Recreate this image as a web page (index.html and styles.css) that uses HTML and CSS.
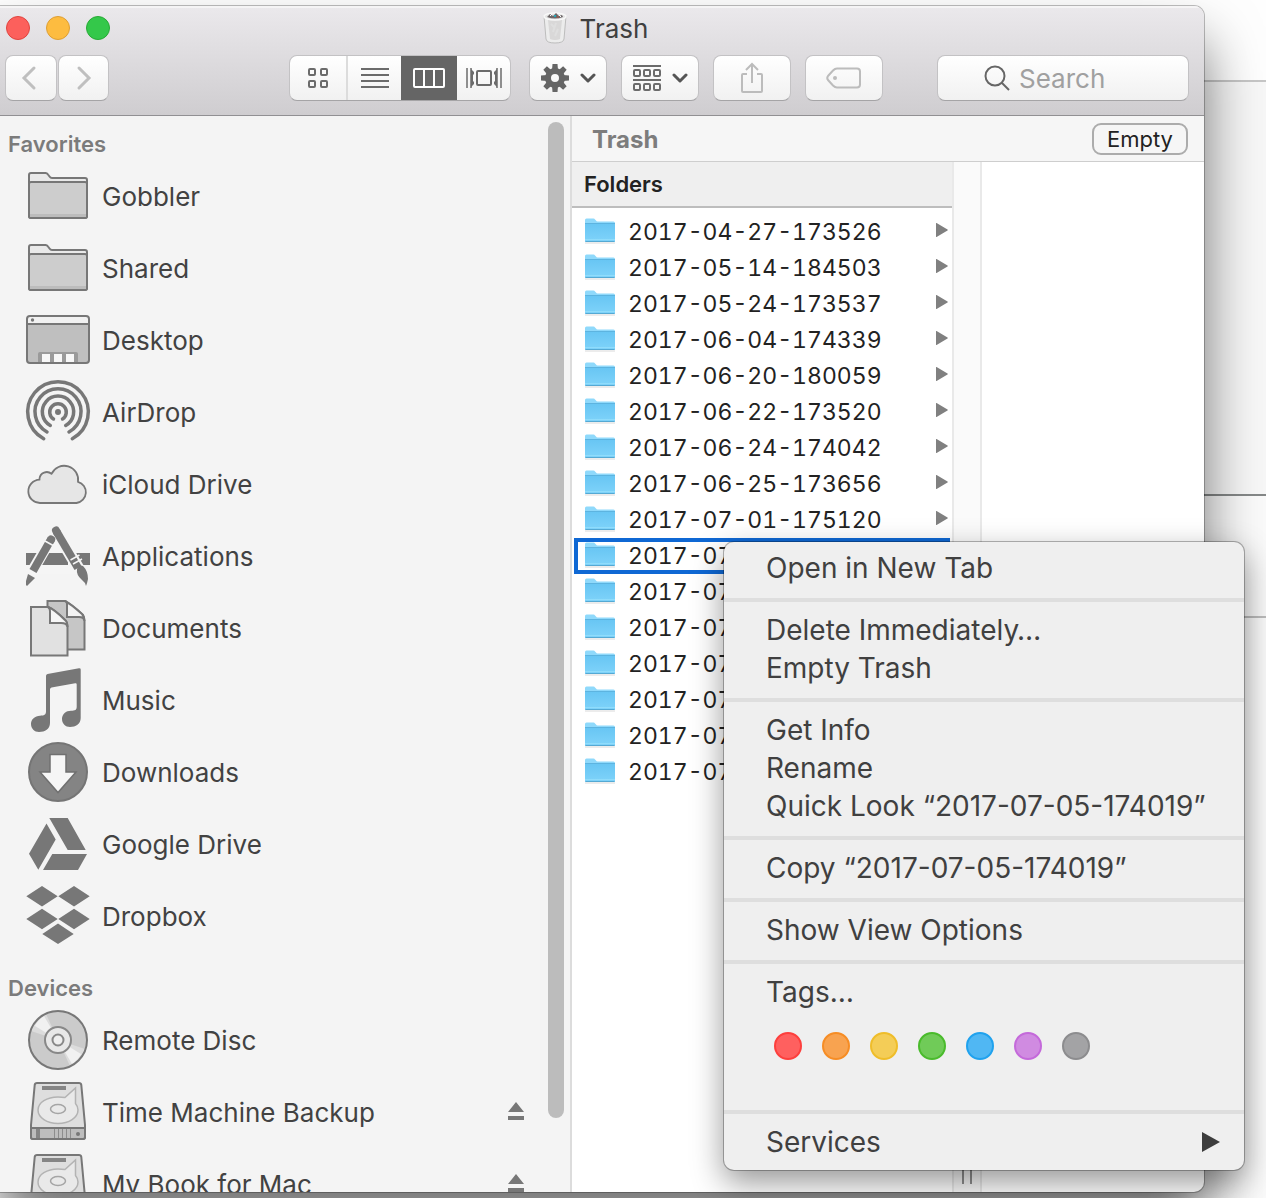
FILE: index.html
```html
<!DOCTYPE html>
<html lang="en">
<head>
<meta charset="utf-8">
<title>Trash</title>
<link rel="stylesheet" href="styles.css">
</head>
<body>
<svg class="defs" aria-hidden="true">
  <defs>
    <linearGradient id="blue" x1="0" y1="0" x2="0" y2="1"><stop offset="0" stop-color="#67c5f3"/><stop offset="1" stop-color="#7fd3fa"/></linearGradient>
    <symbol id="folder" viewBox="0 0 64 64">
      <path d="M3 52V11q0-2 2-2h14.500q1.500 0 2.500 1.500l1.500 2Q24.500 14 26 14h33q2 0 2 2v36q0 2-2 2H5q-2 0-2-2z" fill="#e9e9e9" stroke="#777" stroke-width="2"/>
      <path d="M3 20q0-2 2-2h54q2 0 2 2v32q0 2-2 2H5q-2 0-2-2z" fill="#cdcdcd" stroke="#777" stroke-width="2"/>
      <path d="M4 50h56v3H4z" fill="#bcbcbc"/>
    </symbol>
    <symbol id="blue-folder" viewBox="0 0 30 26">
      <path d="M0 24.500h30v1H0z" fill="#d9d9d9"/>
      <path d="M0 2q0-1.500 1.500-1.500h7Q9.500.5 10 1.500l1 1q.5 1 1.500 1h16Q30 3.500 30 5v18q0 1-1 1H1q-1 0-1-1z" fill="#8fd9fb"/>
      <path d="M0 5h30v18q0 1-1 1H1q-1 0-1-1z" fill="url(#blue)"/>
      <path d="M0 5.500h30" stroke="#5db4e0"/>
      <path d="M0 21.500h30" stroke="#8fdcfb"/>
      <path d="M.5 23.500h29" stroke="#55a9d3"/>
    </symbol>
    <symbol id="drive" viewBox="0 0 64 64">
      <path d="M11 3h42q2 0 2.300 2L59 45v12q0 2-2 2H7q-2 0-2-2V45L8.700 5Q9 3 11 3z" fill="#dedede" stroke="#777" stroke-width="2"/>
      <path d="M5 48h54v9q0 2-2 2H7q-2 0-2-2z" fill="#bdbdbd" stroke="#777" stroke-width="2"/>
      <path d="M16 6h24v4H16zM10 49h4v9h-4z" fill="#858585"/>
      <path d="M28.500 49v9m4-9v9m4-9v9m4-9v9m4-9v9" stroke="#8d8d8d"/>
      <circle cx="52" cy="54" r="2" fill="#777"/>
      <path d="M39 17.500L49.500 8v15.500Q52 26.500 52 30c0 7.500-9 13.500-20 13.500S12 37.500 12 30s9-13 20-13q4 0 7 .5z" fill="#e9e9e9" stroke="#b3b3b3" stroke-width="1.500"/>
      <ellipse cx="32" cy="29" rx="7.500" ry="4.500" fill="#e9e9e9" stroke="#a5a5a5" stroke-width="1.500"/>
    </symbol>
    <symbol id="eject" viewBox="0 0 16 18"><path d="M8 0l8 10H0zM0 14h16v4H0z" fill="#777"/></symbol>
    <symbol id="caret" viewBox="0 0 12 14"><path d="M0 .5Q0-.5 1 .2L11.500 6.500q.7.500 0 1L1 13.800q-1 .7-1-.3z" fill="#808080"/></symbol>
    <symbol id="chevron" viewBox="0 0 16 10"><path d="M2 2l6 6 6-6" fill="none" stroke="#555" stroke-width="3" stroke-linecap="round" stroke-linejoin="round"/></symbol>
  </defs>
</svg>

<div class="desktop">
  <main class="window">
    <header class="chrome">
      <div class="titlebar">
        <div class="lights">
          <button class="light close" aria-label="Close"></button>
          <button class="light minimize" aria-label="Minimize"></button>
          <button class="light zoom" aria-label="Zoom"></button>
        </div>
        <h1 class="title">
          <svg width="26" height="32" viewBox="0 0 26 32" aria-hidden="true">
            <path d="M2 4q11-4 22 0l-2 23q-.5 4-9 4t-9-4z" fill="#ececec" stroke="#bdbdbd"/>
            <path d="M6 8l2 19q5 2 10 0l2-19" fill="#d9d8d8"/><path d="M9 12l4 4M14 11l-3 9M16 17l-3 7" fill="none" stroke="#dfdfdf" stroke-width="2"/>
            <ellipse cx="13" cy="4.500" rx="11" ry="3.500" fill="#e4e4e4" stroke="#f8f8f8" stroke-width="1.500"/>
            <path d="M5 5l3-3 3 2 3-3 3 3 3-1 1 2q-8 3-16 0z" fill="#6d6668"/>
            <path d="M8 4l2-2M17 3l2 2" stroke="#fff"/><path d="M12 4h2" stroke="#27a4b5" stroke-width="2"/><path d="M15 5h2" stroke="#b5523c"/>
          </svg>
          <span>Trash</span>
        </h1>
      </div>
      <div class="toolbar">
        <nav class="history">
          <button class="tool" aria-label="Back"><svg width="20" height="26" viewBox="0 0 20 26"><path d="M13 3L3 13l10 10" fill="none" stroke="#bfbfbf" stroke-width="3" stroke-linecap="round"/></svg></button>
          <button class="tool" aria-label="Forward"><svg width="12" height="26" viewBox="3 0 12 26"><path d="M5 3l10 10L5 23" fill="none" stroke="#bfbfbf" stroke-width="3" stroke-linecap="round"/></svg></button>
        </nav>
        <div class="views">
          <button class="view" aria-label="Icon view"><svg width="20" height="20" viewBox="0 0 20 20" fill="none" stroke="#6b6b6b" stroke-width="2"><rect x="1" y="1" width="6" height="6" rx="1"/><rect x="13" y="1" width="6" height="6" rx="1"/><rect x="1" y="13" width="6" height="6" rx="1"/><rect x="13" y="13" width="6" height="6" rx="1"/></svg></button>
          <button class="view" aria-label="List view"><svg width="28" height="20" viewBox="0 0 28 20"><path d="M0 1h28M0 7h28M0 13h28M0 19h28" stroke="#6b6b6b" stroke-width="2"/></svg></button>
          <button class="view selected" aria-label="Column view" aria-pressed="true"><svg width="32" height="20" viewBox="0 0 32 20"><rect x="1" y="1" width="30" height="18" rx="1" fill="none" stroke="#fff" stroke-width="2"/><path d="M11 1v18M21 1v18" stroke="#fff" stroke-width="2"/></svg></button>
          <button class="view" aria-label="Cover Flow"><svg width="36" height="20" viewBox="0 0 36 20"><rect x="11" y="3" width="14" height="14" rx="1" fill="none" stroke="#6b6b6b" stroke-width="2"/><path d="M1 0v20M35 0v20M31 0v20M5 0v20" stroke="#6b6b6b" stroke-width="1.500"/><path d="M5 1l3 3v2l-1 1v6l1 1v2l-3 3zM31 1l-3 3v2l1 1v6l-1 1v2l3 3z" fill="#6b6b6b"/></svg></button>
        </div>
        <button class="tool menu-tool action" aria-label="Action">
          <svg width="28" height="28" viewBox="-14 -14 28 28" fill="#666"><g id="teeth"><path d="M-2.500-14h5l.5 6h-6zM-2.500 14h5l.5-6h-6zM-14-2.500v5l6 .5v-6zM14-2.500v5l-6 .5v-6z"/></g><use href="#teeth" transform="rotate(45)"/><path fill-rule="evenodd" d="M0-10a10 10 0 1 0 0 20a10 10 0 1 0 0-20zM0-4a4 4 0 1 1 0 8a4 4 0 1 1 0-8z"/></svg>
          <svg width="16" height="10"><use href="#chevron"/></svg>
        </button>
        <button class="tool menu-tool" aria-label="Arrange">
          <svg width="28" height="28" viewBox="0 0 28 28" fill="none" stroke="#6b6b6b" stroke-width="2"><path d="M0 2h28M0 16h28"/><rect x="1" y="6" width="6" height="6" rx="1"/><rect x="11" y="6" width="6" height="6" rx="1"/><rect x="21" y="6" width="6" height="6" rx="1"/><rect x="1" y="20" width="6" height="6" rx="1"/><rect x="11" y="20" width="6" height="6" rx="1"/><rect x="21" y="20" width="6" height="6" rx="1"/></svg>
          <svg width="16" height="10"><use href="#chevron"/></svg>
        </button>
        <button class="tool wide" aria-label="Share"><svg width="24" height="32" viewBox="0 0 24 32" fill="none" stroke="#bcbcbc" stroke-width="2"><path d="M7 12H3q-1 0-1 1v16q0 1 1 1h18q1 0 1-1V13q0-1-1-1h-4M12 21V2M6 8l6-6 6 6"/></svg></button>
        <button class="tool wide" aria-label="Edit tags"><svg width="36" height="22" viewBox="0 0 36 22"><path d="M11 1.500h20q3 0 3 3v13q0 3-3 3H11q-2 0-4-2l-5-5.500q-1.500-2 0-4l5-5.500q2-2 4-2z" fill="none" stroke="#bcbcbc" stroke-width="2"/><circle cx="9" cy="11" r="2" fill="#bcbcbc"/></svg></button>
        <label class="search">
          <svg width="26" height="26" viewBox="0 0 26 26" aria-hidden="true"><circle cx="11" cy="11" r="9.500" fill="none" stroke="#666" stroke-width="2"/><path d="M18 18l7 7" stroke="#666" stroke-width="2"/></svg>
          <input type="text" placeholder="Search" aria-label="Search">
        </label>
      </div>
    </header>

    <div class="panes">
      <aside class="sidebar">
        <div class="places">
          <h2 class="heading">Favorites</h2>
          <ul class="list">
            <li><a class="place" href="#"><svg class="icon"><use href="#folder"/></svg><span>Gobbler</span></a></li>
            <li><a class="place" href="#"><svg class="icon"><use href="#folder"/></svg><span>Shared</span></a></li>
            <li><a class="place" href="#"><svg class="icon" viewBox="0 0 64 64"><rect x="1" y="8" width="62" height="47" rx="3" fill="#bfbfbf"/><path d="M1 16v-5q0-3 3-3h56q3 0 3 3v5z" fill="#f1f1f1"/><path d="M12 55V46q0-2 2-2h36q2 0 2 2v9z" fill="#9a9a9a"/><path d="M16 46h8v8h-8zM28 46h8v8h-8zM40 46h8v8h-8z" fill="#f7f7f7"/><rect x="1" y="8" width="62" height="47" rx="3" fill="none" stroke="#777" stroke-width="2"/><path d="M1 16h62" stroke="#777" stroke-width="2"/><circle cx="6.500" cy="12" r="1.700" fill="#777"/></svg><span>Desktop</span></a></li>
            <li><a class="place" href="#"><svg class="icon" viewBox="0 0 64 64" fill="none" stroke="#777" stroke-width="3.500" stroke-linecap="round"><circle cx="32" cy="32" r="3" fill="#777" stroke="none"/><path d="M27.500 39a8.300 8.300 0 1 1 9 0M24.300 45.500a15.700 15.700 0 1 1 15.400 0M21 52a23 23 0 1 1 22 0M17.700 58.700a30.300 30.300 0 1 1 28.600 0"/></svg><span>AirDrop</span></a></li>
            <li><a class="place" href="#"><svg class="icon" viewBox="0 0 64 64"><path d="M14.500 51A11.600 11.600 0 0 1 13.500 27.700V26.500a7.300 7.300 0 0 1 12-4.700A14 14 0 0 1 52 29.900 10.800 10.800 0 0 1 50.500 51z" fill="#e6e6e6" stroke="#777" stroke-width="1.800" stroke-linejoin="round"/></svg><span>iCloud Drive</span></a></li>
            <li><a class="place" href="#"><svg class="icon" viewBox="0 0 64 64"><path d="M0 29h64v12H0z" fill="#777"/><path d="M31 10L9 50h46z" fill="#f5f5f5"/><path d="M19 29h23v12H11z" fill="#777"/><g fill="none"><path d="M25.500 14L5 49.500" stroke="#f5f5f5" stroke-width="11"/><path d="M25.500 14.500L7 47" stroke="#777" stroke-width="8"/><path d="M29 5l25 42" stroke="#f5f5f5" stroke-width="12"/><path d="M30.500 7.500L52 44" stroke="#777" stroke-width="8"/><path d="M30 6.500l1 2M24.700 16.500l.5-1" stroke="#777" stroke-width="8" stroke-linecap="round"/><path d="M19 17l9 5M47 40l9-5M44.500 36l9-5" stroke="#f5f5f5" stroke-width="1.500"/></g><path d="M2 50l7 4-8 8-1-1v-4zM51 45q2-5 6-3 5 5 5 13-1 5-2 7-1-4-4-6-6-5-5-11z" fill="#777"/></svg><span>Applications</span></a></li>
            <li><a class="place" href="#"><svg class="icon" viewBox="0 0 64 64" stroke="#777" stroke-width="2"><path d="M21.500 5H39Q46 9 57 19q1.500 2 1.500 6v28.500h-37z" fill="#c6c6c6"/><path d="M39 5q2 0 2 3v13h12q5 0 5.500 4Q58 20 56 18 45 8 39 5z" fill="#f3f3f3"/><path d="M5 11h17q7 3 17.500 13.500 2 2 2 5.500v29.500H5z" fill="#e1e1e1"/><path d="M22 11q2 1 2 4v12h11q6 0 6.500 4 0-5-2.500-7Q28 13 22 11z" fill="#f6f6f6"/></svg><span>Documents</span></a></li>
            <li><a class="place" href="#"><svg class="icon" viewBox="0 0 64 64" fill="#777"><path d="M20 8q0-1.500 1.500-2L53 .2q1.700-.2 1.700 1.300V50c0 6-5 9-10.700 9-4.500 0-8-3.500-8-8 0-5 4-8.300 9-8.300 4 0 5.700-.7 5.700-4V16.500q0-1.500-1.500-1.200L25.500 19.500q-1.500.3-1.500 2V55c0 6-5 9-11 9-4.500 0-8-3.500-8-8 0-5 4-8 9-8.300 4-.2 6-1 6-4.200z"/></svg><span>Music</span></a></li>
            <li><a class="place" href="#"><svg class="icon" viewBox="0 0 64 64"><circle cx="32" cy="32" r="29" fill="#848484" stroke="#757575" stroke-width="2"/><path d="M24 14.500h16v17.500h10L32 52.500 14 32h10z" fill="#f6f6f6" stroke="#707070" stroke-width="1.500"/></svg><span>Downloads</span></a></li>
            <li><a class="place" href="#"><svg class="icon" viewBox="0 0 64 64" fill="#777"><path d="M20.500 11.500l9.200 16-17.400 30.200L3 41.700zM23.300 6h18.400l18 32h-18zM26.300 42H61l-9 16H17z"/></svg><span>Google Drive</span></a></li>
            <li><a class="place" href="#"><svg class="icon" viewBox="0 0 64 64" fill="#777"><path d="M16 2l15.700 10.300L16 22.600.3 12.300zM48 2l15.700 10.300L48 22.600 32.300 12.300zM16 24.700L31.700 35 16 45.300.3 35zM48 24.700L63.700 35 48 45.300 32.300 35zM32 39.500L47.700 50 32 60 16.300 50z"/></svg><span>Dropbox</span></a></li>
          </ul>
          <h2 class="heading later">Devices</h2>
          <ul class="list">
            <li><a class="place" href="#"><svg class="icon" viewBox="0 0 64 64"><circle cx="32" cy="32" r="29" fill="#cbcbcb"/><path d="M32 32L5 23Q7 15 14 9.500L20 6z" fill="#dcdcdc"/><path d="M32 32L9 18q2-5 9-10z" fill="#f1f1f1"/><path d="M32 32l27 9q-2 8-9 13.500L44 58z" fill="#dcdcdc"/><path d="M32 32l23 14q-2 5-9 10z" fill="#f1f1f1"/><circle cx="32" cy="32" r="29" fill="none" stroke="#777" stroke-width="2"/><circle cx="32" cy="32" r="13" fill="#e8e8e8" stroke="#888" stroke-width="2"/><circle cx="32" cy="32" r="5.500" fill="#efefef" stroke="#888" stroke-width="2"/></svg><span>Remote Disc</span></a></li>
            <li class="device"><a class="place" href="#"><svg class="icon"><use href="#drive"/></svg><span>Time Machine Backup</span></a><button class="eject" aria-label="Eject Time Machine Backup"><svg width="16" height="18"><use href="#eject"/></svg></button></li>
            <li class="device"><a class="place" href="#"><svg class="icon"><use href="#drive"/></svg><span>My Book for Mac</span></a><button class="eject" aria-label="Eject My Book for Mac"><svg width="16" height="18"><use href="#eject"/></svg></button></li>
          </ul>
        </div>
        <div class="scrollbar"></div>
      </aside>

      <section class="browser">
        <div class="pathbar"><h2 class="place-name">Trash</h2><button class="empty">Empty</button></div>
        <div class="columns">
          <div class="column">
            <h3 class="column-head">Folders</h3>
            <ul class="files">
              <li><button class="file"><svg class="fi"><use href="#blue-folder"/></svg><span>2017-04-27-173526</span><svg class="more"><use href="#caret"/></svg></button></li>
              <li><button class="file"><svg class="fi"><use href="#blue-folder"/></svg><span>2017-05-14-184503</span><svg class="more"><use href="#caret"/></svg></button></li>
              <li><button class="file"><svg class="fi"><use href="#blue-folder"/></svg><span>2017-05-24-173537</span><svg class="more"><use href="#caret"/></svg></button></li>
              <li><button class="file"><svg class="fi"><use href="#blue-folder"/></svg><span>2017-06-04-174339</span><svg class="more"><use href="#caret"/></svg></button></li>
              <li><button class="file"><svg class="fi"><use href="#blue-folder"/></svg><span>2017-06-20-180059</span><svg class="more"><use href="#caret"/></svg></button></li>
              <li><button class="file"><svg class="fi"><use href="#blue-folder"/></svg><span>2017-06-22-173520</span><svg class="more"><use href="#caret"/></svg></button></li>
              <li><button class="file"><svg class="fi"><use href="#blue-folder"/></svg><span>2017-06-24-174042</span><svg class="more"><use href="#caret"/></svg></button></li>
              <li><button class="file"><svg class="fi"><use href="#blue-folder"/></svg><span>2017-06-25-173656</span><svg class="more"><use href="#caret"/></svg></button></li>
              <li><button class="file"><svg class="fi"><use href="#blue-folder"/></svg><span>2017-07-01-175120</span><svg class="more"><use href="#caret"/></svg></button></li>
              <li><button class="file targeted"><svg class="fi"><use href="#blue-folder"/></svg><span>2017-07-05-174019</span><svg class="more"><use href="#caret"/></svg></button></li>
              <li><button class="file"><svg class="fi"><use href="#blue-folder"/></svg><span>2017-07-06-173811</span><svg class="more"><use href="#caret"/></svg></button></li>
              <li><button class="file"><svg class="fi"><use href="#blue-folder"/></svg><span>2017-07-08-174225</span><svg class="more"><use href="#caret"/></svg></button></li>
              <li><button class="file"><svg class="fi"><use href="#blue-folder"/></svg><span>2017-07-10-173904</span><svg class="more"><use href="#caret"/></svg></button></li>
              <li><button class="file"><svg class="fi"><use href="#blue-folder"/></svg><span>2017-07-12-174530</span><svg class="more"><use href="#caret"/></svg></button></li>
              <li><button class="file"><svg class="fi"><use href="#blue-folder"/></svg><span>2017-07-14-173648</span><svg class="more"><use href="#caret"/></svg></button></li>
              <li><button class="file"><svg class="fi"><use href="#blue-folder"/></svg><span>2017-07-16-174102</span><svg class="more"><use href="#caret"/></svg></button></li>
            </ul>
          </div>
          <div class="splitter"><span class="grip"></span></div>
          <div class="column-rest"></div>
        </div>
      </section>
    </div>
  </main>

  <div class="menu" role="menu">
    <div class="group"><button class="item" role="menuitem">Open in New Tab</button></div>
    <div class="group"><button class="item" role="menuitem">Delete Immediately…</button><button class="item" role="menuitem">Empty Trash</button></div>
    <div class="group"><button class="item" role="menuitem">Get Info</button><button class="item" role="menuitem">Rename</button><button class="item" role="menuitem">Quick Look “2017-07-05-174019”</button></div>
    <div class="group"><button class="item" role="menuitem">Copy “2017-07-05-174019”</button></div>
    <div class="group"><button class="item" role="menuitem">Show View Options</button></div>
    <div class="group">
      <button class="item" role="menuitem">Tags…</button>
      <div class="tags">
        <button class="tag red" aria-label="Red"></button>
        <button class="tag orange" aria-label="Orange"></button>
        <button class="tag yellow" aria-label="Yellow"></button>
        <button class="tag green" aria-label="Green"></button>
        <button class="tag blue" aria-label="Blue"></button>
        <button class="tag purple" aria-label="Purple"></button>
        <button class="tag gray" aria-label="Gray"></button>
      </div>
    </div>
    <div class="group"><button class="item" role="menuitem">Services<svg width="18" height="20" viewBox="0 0 18 20"><path d="M0 0l18 10L0 20z" fill="#3d3d3d"/></svg></button></div>
  </div>
</div>
</body>
</html>
```
FILE: styles.css
```css
* { box-sizing: border-box; }
body { margin: 0; font-family: Inter, "Liberation Sans", sans-serif; color: #222; }
button { font: inherit; color: inherit; margin: 0; padding: 0; border: 0; background: none; }
h1, h2, h3, ul { margin: 0; padding: 0; font-weight: 400; }
ul { list-style: none; }
svg { display: block; flex: none; overflow: visible; }
.defs { position: absolute; width: 0; height: 0; }

.desktop {
  position: relative;
  height: 100vh;
  padding: 6px 62px 6px 0;
  overflow: hidden;
  background: linear-gradient(#fefefe 80px, #c6c6c6 80px, #c6c6c6 82px, #f7f7f7 82px, #f7f7f7 494px, #858888 494px, #858888 496px, #fafafa 496px, #fafafa 616px, #bdbdbd 616px, #bdbdbd 618px, #fbfbfb 618px);
}

.window {
  display: flex;
  flex-direction: column;
  height: 100%;
  border-radius: 0 10px 10px 0;
  background: #fff;
  overflow: hidden;
  box-shadow: 0 0 0 1px rgba(0, 0, 0, .25), 0 36px 56px rgba(0, 0, 0, .55);
}

.chrome {
  flex: none;
  padding-bottom: 14px;
  border-bottom: 1px solid #919093;
  background: linear-gradient(#ebe9ec, #cfcdd0);
  box-shadow: inset 0 2px 0 #f5f4f5;
}
.titlebar {
  display: grid;
  grid-template-columns: 1fr auto 1fr;
  align-items: center;
  height: 49px;
  padding: 0 20px 5px 6px;
}
.lights { display: flex; gap: 16px; }
.light { width: 24px; height: 24px; border: 1px solid; border-radius: 50%; }
.close { background: #fc605c; border-color: #e0443f; }
.minimize { background: #fdbc40; border-color: #de9f34; }
.zoom { background: #34c84a; border-color: #27aa35; }
.title { display: flex; align-items: center; gap: 12px; font-size: 26px; line-height: 32px; color: #404040; }
.title span { padding-top: 2px; }

.toolbar { display: flex; gap: 14px; height: 46px; padding: 0 15px 0 5px; }
.history { display: flex; gap: 1px; width: 104px; margin-right: 166px; }
.tool, .views, .search {
  border: 1px solid #c3c2c4;
  border-bottom-color: #a5a4a6;
  border-radius: 8px;
  background: linear-gradient(#fff, #f1f1f1);
}
.tool { display: flex; flex: 1; align-items: center; justify-content: center; }
.menu-tool, .wide { flex: none; width: 78px; }
.menu-tool { gap: 11px; padding-left: 1px; }
.action { margin-left: 4px; }
.views { display: grid; grid-template-columns: 56px 55px 56px 53px; overflow: hidden; }
.view { display: flex; align-items: center; justify-content: center; }
.view + .view { border-left: 2px solid #dcdcdc; }
.view.selected { margin: -1px 0; background: #656565; border: 0; }
.view.selected + .view { border-left: 0; }
.search { display: flex; flex: 1; align-items: center; gap: 9px; min-width: 0; margin-left: 40px; padding-left: 46px; }
.search input { flex: 1; min-width: 0; padding: 0; border: 0; outline: 0; background: none; font: inherit; font-size: 26px; }
.search input::placeholder { color: #a0a0a0; opacity: 1; }

.panes { display: grid; grid-template-columns: 572px 1fr; grid-template-rows: minmax(0, 1fr); flex: 1; min-height: 0; }
.sidebar { display: flex; gap: 24px; border-right: 2px solid #dcdcdc; padding-right: 6px; background: #f4f4f4; overflow: hidden; }
.places { flex: 1; }
.heading { padding: 12px 8px 0; font-size: 22px; font-weight: 600; line-height: 32px; color: #7b7b7b; }
.later { padding-top: 20px; }
.place { display: flex; flex: 1; align-items: center; gap: 12px; height: 72px; padding-left: 26px; color: #424242; font-size: 26px; line-height: 32px; text-decoration: none; }
.place span { padding-top: 2px; }
.icon { width: 64px; height: 64px; }
.device { display: flex; align-items: center; }
.eject { padding-bottom: 2px; }
.scrollbar { flex: none; width: 16px; margin: 6px 0 74px; border-radius: 8px; background: #bcbcbc; }

.browser { display: flex; flex-direction: column; min-width: 0; }
.pathbar { display: flex; flex: none; align-items: center; justify-content: space-between; height: 46px; padding: 0 16px 0 20px; border-bottom: 1px solid #cecece; background: #f6f6f6; }
.place-name { padding-top: 2px; font-size: 24px; font-weight: 700; line-height: 32px; color: #7d7d7d; }
.empty { width: 96px; height: 32px; border: 2px solid #acacac; border-radius: 9px; font-size: 22px; line-height: 28px; color: #222; }
.columns { display: flex; flex: 1; min-height: 0; }
.column { flex: none; width: 380px; }
.column-head { height: 46px; padding-left: 12px; border-bottom: 2px solid #bdbdbd; background: #efefef; font-size: 22px; font-weight: 600; line-height: 44px; }
.files { padding: 6px 2px; }
.file { display: flex; align-items: center; width: 100%; height: 36px; padding: 0 2px 0 11px; font-size: 23px; line-height: 36px; font-variant-numeric: tabular-nums; text-align: left; }
.file span { flex: 1; padding-left: 13px; }
.targeted { box-shadow: inset 0 0 0 4px #0f68d4; }
.fi { width: 30px; height: 26px; margin-bottom: 2px; }
.more { width: 12px; height: 14px; margin-bottom: 4px; }
.splitter { display: flex; flex: none; align-items: flex-end; justify-content: center; width: 30px; padding-bottom: 8px; border: solid #e9e9e9; border-width: 0 2px; background: #fafafa; }
.grip { width: 10px; height: 24px; border: solid #909090; border-width: 0 2px; }
.column-rest { flex: 1; }

.menu {
  position: absolute;
  left: 724px;
  top: 542px;
  width: 520px;
  border-radius: 10px;
  background: #efefef;
  box-shadow: 0 0 0 1px rgba(0, 0, 0, .28), 0 12px 32px rgba(0, 0, 0, .42);
}
.group { padding: 9px 0 11px; border-bottom: 4px solid #dedede; }
.group:first-child { padding-top: 7px; }
.group:last-child { padding-bottom: 9px; border-bottom: 0; }
.item { display: flex; align-items: center; justify-content: space-between; width: 100%; height: 38px; padding: 0 24px 0 42px; font-size: 28px; line-height: 38px; color: #404040; white-space: nowrap; }
.tags { display: flex; gap: 20px; height: 88px; padding: 21px 50px; }
.tag { width: 28px; height: 28px; border: 2px solid; border-radius: 50%; }
.red { background: #ff605f; border-color: #fd3f3d; }
.orange { background: #f8a350; border-color: #f68d25; }
.yellow { background: #f4cd57; border-color: #efbd2a; }
.green { background: #70cb58; border-color: #4abb2c; }
.blue { background: #50b7f3; border-color: #20a2ee; }
.purple { background: #d08be1; border-color: #c469da; }
.gray { background: #a3a3a5; border-color: #8c8c8e; }
```
